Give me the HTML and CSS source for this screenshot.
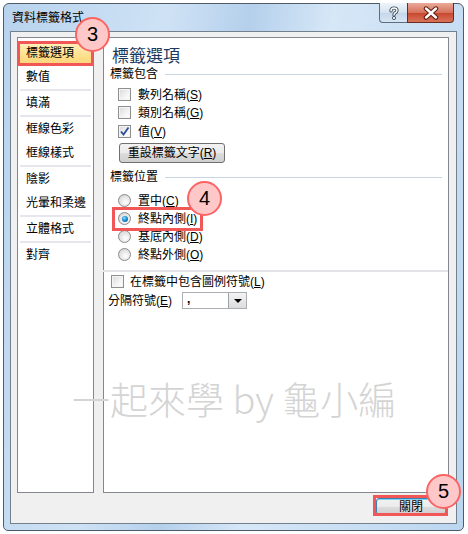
FILE: index.html
```html
<!DOCTYPE html>
<html lang="zh-Hant">
<head>
    <meta charset="UTF-8">
    <title>資料標籤格式</title>
    <link rel="stylesheet" href="styles.css">
</head>
<body>
    <div class="window">
        <div class="titlebar">
            <span class="title">資料標籤格式</span>
            <div class="caption">
                <span class="cap-help">
                    <svg width="14" height="14" viewBox="0 0 14 14">
                        <path d="M4 5 Q4 2 7 2 Q10 2 10 4.5 Q10 6 8 7 Q7 7.5 7 9" fill="none" stroke="#3a4656" stroke-width="3.2" stroke-linecap="round"/>
                        <path d="M4 5 Q4 2 7 2 Q10 2 10 4.5 Q10 6 8 7 Q7 7.5 7 9" fill="none" stroke="#fff" stroke-width="1.4" stroke-linecap="round"/>
                        <circle cx="7" cy="12" r="1.6" fill="#fff" stroke="#3a4656" stroke-width="0.9"/>
                    </svg>
                </span>
                <span class="cap-close">
                    <svg width="16" height="14" viewBox="0 0 16 14">
                        <path d="M3 2.5 L13 11.5 M13 2.5 L3 11.5" stroke="#5a1a10" stroke-width="4.4" stroke-linecap="round"/>
                        <path d="M3 2.5 L13 11.5 M13 2.5 L3 11.5" stroke="#fff" stroke-width="2.4" stroke-linecap="round"/>
                    </svg>
                </span>
            </div>
        </div>

        <div class="client">
            <div class="panes">
                <ul class="nav">
                    <li class="selected">標籤選項</li>
                    <li>數值</li>
                    <li class="sep"></li>
                    <li>填滿</li>
                    <li class="sep"></li>
                    <li>框線色彩</li>
                    <li>框線樣式</li>
                    <li class="sep"></li>
                    <li>陰影</li>
                    <li>光暈和柔邊</li>
                    <li class="sep"></li>
                    <li>立體格式</li>
                    <li class="sep"></li>
                    <li>對齊</li>
                </ul>

                <div class="content">
                    <div class="heading">標籤選項</div>

                    <div class="group">
                        <span>標籤包含</span><span class="rule"></span>
                    </div>
                    <div class="opt"><span class="check"></span>數列名稱(<u>S</u>)</div>
                    <div class="opt"><span class="check"></span>類別名稱(<u>G</u>)</div>
                    <div class="opt"><span class="check on">
                        <svg width="11" height="11" viewBox="0 0 11 11"><path d="M2 5.5 L4.5 8.5 L9.5 1.5" fill="none" stroke="#2c4aa0" stroke-width="1.8"/></svg>
                    </span>值(<u>V</u>)</div>
                    <button class="btn reset">重設標籤文字(<u>R</u>)</button>

                    <div class="group group-pos">
                        <span>標籤位置</span><span class="rule"></span>
                    </div>
                    <div class="opt radio-row"><span class="radio"></span>置中(<u>C</u>)</div>
                    <div class="opt radio-row"><span class="radio on"></span>終點內側(<u>I</u>)</div>
                    <div class="opt radio-row"><span class="radio"></span>基底內側(<u>D</u>)</div>
                    <div class="opt radio-row"><span class="radio"></span>終點外側(<u>O</u>)</div>

                    <div class="divider"></div>
                    <div class="opt legend"><span class="check"></span>在標籤中包含圖例符號(<u>L</u>)</div>
                    <div class="sep-row">
                        <span class="sep-label">分隔符號(<u>E</u>)</span>
                        <span class="select">
                            <span class="select-val">,</span>
                            <span class="select-btn"></span>
                        </span>
                    </div>
                </div>
            </div>

            <div class="footer">
                <button class="btn close">關閉</button>
            </div>
        </div>
    </div>

    <!-- annotations -->
    <div class="watermark">一起來學 by 龜小編</div>
    <div class="mark-box box-nav"></div>
    <div class="mark-box box-radio"></div>
    <div class="mark-box box-close"></div>
    <div class="badge badge-3">3</div>
    <div class="badge badge-4">4</div>
    <div class="badge badge-5">5</div>
</body>
</html>
```

FILE: styles.css
```css
* {
    box-sizing: border-box;
}
body {
    margin: 0;
    width: 468px;
    height: 534px;
    overflow: hidden;
    position: relative;
    background: #fff;
    font-family: "Liberation Sans", "Noto Sans CJK TC", sans-serif;
    font-size: 12px;
    color: #000;
}
u {
    text-decoration: underline;
}

/* window frame */
.window {
    margin: 3px 0 0 3px;
    width: 461px;
    height: 528px;
    border: 1px solid #4f5b68;
    border-radius: 6px 6px 5px 5px;
    padding: 0 6px 6px 6px;
    background: linear-gradient(100deg, #b8d3ee 0%, #cfe2f5 30%, #b5d0ec 45%, #d6e7f7 60%, #bcd6f0 100%);
}
.titlebar {
    height: 27px;
    display: flex;
    justify-content: space-between;
    align-items: flex-start;
    padding: 0 3px 0 2px;
}
.title {
    margin-top: 6px;
    line-height: 16px;
}
.caption {
    display: flex;
    margin-top: -1px;
}
.cap-help, .cap-close {
    height: 20px;
    display: flex;
    align-items: center;
    justify-content: center;
    border: 1px solid #5d6d80;
    border-top: none;
}
.cap-help {
    width: 28px;
    border-radius: 0 0 0 4px;
    border-right: none;
    background: linear-gradient(#eef4fa, #d5e3f1 50%, #c3d6ea 51%, #d7e6f4);
}
.cap-close {
    width: 47px;
    border-radius: 0 0 4px 0;
    border-color: #6b2a20;
    background: linear-gradient(#e9aa9a, #d6735d 50%, #c7452c 51%, #d9735c);
}

/* client area */
.client {
    height: 493px;
    border: 1px solid #73808e;
    background: #f0f0f0;
    padding: 5px 7px 0 6px;
}
.panes {
    display: flex;
    gap: 9px;
    height: 456px;
}
.nav {
    list-style: none;
    margin: 0;
    width: 77px;
    padding: 3px 1px;
    background: #fff;
    border: 1px solid #828790;
}
.nav li {
    height: 24px;
    line-height: 25px;
    padding-left: 7px;
}
.nav li.selected {
    background: linear-gradient(#fff3c4, #fde08e 60%, #fbd374);
}
.nav li.sep {
    height: 2px;
    margin: 0 1px;
    background: #e6e6ee;
}

.content {
    flex: 1;
    background: #fff;
    border: 1px solid #828790;
    padding: 0 6px;
}
.heading {
    margin: 8px 0 0 2px;
    height: 21px;
    line-height: 22px;
    font-size: 17px;
    color: #1d3a5e;
}
.group {
    display: flex;
    align-items: center;
    height: 14px;
    line-height: 15px;
}
.rule {
    flex: 1;
    height: 1px;
    margin-left: 7px;
    background: #c9d5e1;
}
.group-pos {
    margin-top: 7px;
}
.opt {
    display: flex;
    align-items: center;
    height: 18.5px;
    line-height: 16px;
    padding: 1px 0 0 8px;
}
.group + .opt {
    margin-top: 4px;
}
.group-pos + .opt {
    margin-top: 7.5px;
}
.radio-row {
    height: 18px;
}

.check {
    width: 13px;
    height: 13px;
    margin: -1px 7px 0 0;
    border: 1px solid #8e8f8f;
    background: linear-gradient(135deg, #d9d9d9, #f4f4f4 60%, #fff);
    box-shadow: inset 0 0 0 1px #f4f4f4;
    display: flex;
    align-items: center;
    justify-content: center;
}
.radio {
    width: 13px;
    height: 13px;
    margin: -1px 7px 0 0;
    border-radius: 50%;
    border: 1px solid #8a8a8a;
    background: radial-gradient(circle at 60% 65%, #fff 0%, #e4e4e4 55%, #c8c8c8 100%);
    position: relative;
}
.radio.on::after {
    content: "";
    position: absolute;
    left: 2.5px;
    top: 2.5px;
    width: 6px;
    height: 6px;
    border-radius: 50%;
    background: radial-gradient(circle at 40% 35%, #8fe0ff 0%, #1c8ed2 45%, #0c4f8c 100%);
}

.btn {
    font-family: inherit;
    font-size: 12px;
    color: #000;
    border: 1px solid #707070;
    border-radius: 3px;
    background: linear-gradient(#f2f2f2, #ebebeb 50%, #dddddd 51%, #cfcfcf);
    padding: 0;
}
.reset {
    display: block;
    margin: 2.5px 0 0 9px;
    width: 106px;
    height: 20px;
    line-height: 19px;
}

.divider {
    height: 2px;
    margin: 6.5px -6px 0 -7px;
    background: #e3e3e8;
}
.opt.legend {
    height: 18px;
    padding-left: 1px;
}
.opt.legend .check {
    margin-right: 6px;
}
.sep-row {
    display: flex;
    align-items: center;
    height: 20px;
    line-height: 16px;
    padding-top: 1px;
    margin-left: -2px;
}
.sep-label {
    width: 74px;
}
.select {
    display: flex;
    width: 65px;
    height: 17px;
    margin-top: -1px;
    border: 1px solid #abadb3;
    background: #fff;
}
.select-val {
    flex: 1;
    padding-left: 4px;
    line-height: 13px;
    font-weight: bold;
}
.select-btn {
    width: 18px;
    border-left: 1px solid #9ca2aa;
    background: linear-gradient(#f4f4f4, #dcdcdc);
    position: relative;
}
.select-btn::after {
    content: "";
    position: absolute;
    left: 5px;
    top: 6px;
    border-left: 4px solid transparent;
    border-right: 4px solid transparent;
    border-top: 4px solid #000;
}

.footer {
    display: flex;
    justify-content: flex-end;
    margin-top: 5px;
    padding-right: 3px;
}
.close {
    width: 70px;
    height: 17px;
    line-height: 16px;
    border-color: #3c7fb1;
    box-shadow: inset 0 1px 0 #7fd3f7;
}

/* annotations */
.watermark {
    position: absolute;
    left: 72px;
    top: 379px;
    font-family: "Noto Sans CJK TC", sans-serif;
    font-size: 38px;
    line-height: 38px;
    font-weight: 300;
    color: #d4d4d4;
    white-space: nowrap;
}
.mark-box {
    position: absolute;
    border: 3px solid #f25757;
}
.box-nav {
    left: 17px;
    top: 41px;
    width: 77px;
    height: 25px;
}
.box-radio {
    left: 112px;
    top: 207px;
    width: 91px;
    height: 24px;
}
.box-close {
    left: 373px;
    top: 495px;
    width: 75px;
    height: 21px;
}
.badge {
    position: absolute;
    width: 35px;
    height: 35px;
    border-radius: 50%;
    background: #ffc8c8;
    border: 2px solid #fb6464;
    font-family: "Liberation Sans", Arial, sans-serif;
    font-size: 20px;
    line-height: 31px;
    text-align: center;
}
.badge-3 {
    left: 75px;
    top: 17px;
}
.badge-4 {
    left: 187px;
    top: 181px;
}
.badge-5 {
    left: 426px;
    top: 474px;
}
```
